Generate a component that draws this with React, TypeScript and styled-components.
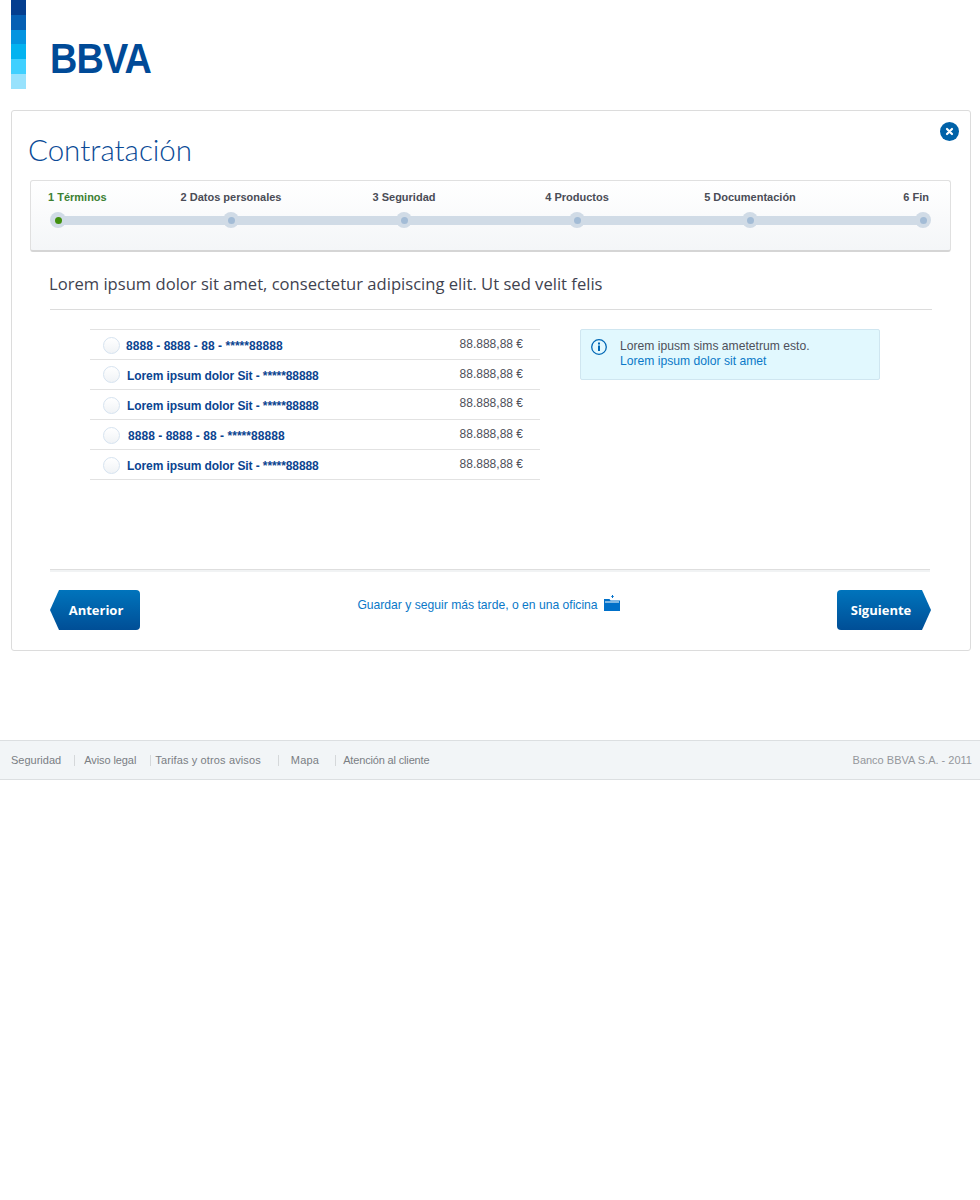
import React from "react";
import styled, { createGlobalStyle } from "styled-components";

const GlobalStyle = createGlobalStyle`
  html, body {
    margin: 0;
    padding: 0;
    background: #fff;
    font-family: "Liberation Sans", Arial, sans-serif;
  }
`;

const Page = styled.div`
  width: 980px;
  height: 1200px;
  overflow: hidden;
`;

const Header = styled.header`
  height: 110px;
  padding-left: 11px;
  display: flex;
  gap: 24px;
`;

const Stripes = styled.div`
  width: 15px;
  height: 89px;
  display: flex;
  flex-direction: column;
`;

const Stripe = styled.div<{ $color: string }>`
  flex: 1;
  background: ${({ $color }) => $color};
`;

const Logo = styled.div`
  margin-top: 35px;
  height: 46px;
  width: 100px;
  font-family: "Liberation Sans", Arial, sans-serif;
  font-size: 43px;
  line-height: 46px;
  font-weight: 700;
  color: #004a97;
  transform: scaleX(0.88);
  transform-origin: left center;
  letter-spacing: -1px;
  white-space: nowrap;
`;

const Card = styled.main`
  position: relative;
  box-sizing: border-box;
  width: 960px;
  height: 541px;
  margin-left: 11px;
  border: 1px solid #dcdcdc;
  border-radius: 3px;
  padding: 0 19px 0 18px;
`;

const CloseButton = styled.button`
  position: absolute;
  top: 11px;
  right: 11px;
  width: 19px;
  height: 19px;
  padding: 0;
  border: none;
  background: none;
  display: block;
`;

const Title = styled.h1`
  margin: 19px 0 0 -2px;
  height: 50px;
  font-family: Lato, sans-serif;
  font-size: 29.5px;
  line-height: 40px;
  font-weight: 300;
  color: #0a4a96;
`;

const Stepper = styled.section`
  box-sizing: border-box;
  width: 921px;
  height: 72px;
  border: 1px solid #e0e0e0;
  border-bottom: 2px solid #d5d5d5;
  border-radius: 3px;
  background: linear-gradient(#fff, #f4f6f8);
  padding: 9px 21px 0 17px;
`;

const StepLabels = styled.div`
  display: grid;
  grid-template-columns: 96.5px repeat(4, 173px) 1fr;
  height: 15px;
`;

const StepLabel = styled.span<{ $active?: boolean; $align: string }>`
  font-size: 11px;
  line-height: 15px;
  font-weight: 700;
  text-align: ${({ $align }) => $align};
  white-space: nowrap;
  color: ${({ $active }) => ($active ? "#3c8032" : "#4a4c56")};
`;

const StepTrack = styled.div`
  position: relative;
  margin: 7px -13px 0 2px;
  display: flex;
  justify-content: space-between;
  width: 881px;
`;

const TrackBar = styled.div`
  position: absolute;
  left: 8px;
  right: 8px;
  top: 4px;
  height: 9px;
  background: #d0dbe6;
`;

const Knob = styled.div`
  position: relative;
  width: 16px;
  height: 16px;
  border-radius: 50%;
  background: #d0dbe6;
  display: flex;
  align-items: center;
  justify-content: center;
`;

const KnobDot = styled.div<{ $active?: boolean }>`
  width: 7px;
  height: 7px;
  border-radius: 50%;
  background: ${({ $active }) => ($active ? "#41900f" : "#a3bcd6")};
`;

const Heading = styled.h2`
  margin: 20px 0 0 20px;
  height: 37px;
  width: 882px;
  border-bottom: 1px solid #dcdcdc;
  font-family: "Open Sans", sans-serif;
  font-size: 16.6px;
  line-height: 24px;
  font-weight: 400;
  text-indent: -1px;
  white-space: nowrap;
  color: #3f4350;
  box-sizing: content-box;
`;

const Columns = styled.div`
  display: flex;
  margin: 19px 0 0 60px;
  gap: 40px;
  height: 240px;
`;

const AccountList = styled.ul`
  list-style: none;
  margin: 0;
  padding: 0;
  width: 450px;
  height: 151px;
  border-top: 1px solid #e2e2e2;
`;

const AccountRow = styled.li`
  box-sizing: border-box;
  height: 30px;
  border-bottom: 1px solid #e2e2e2;
  display: flex;
  align-items: center;
  padding: 0 17px 0 13px;
`;

const Radio = styled.span<{ $shift: number }>`
  box-sizing: border-box;
  flex: none;
  width: 17px;
  height: 17px;
  border: 1.5px solid #d6e3f0;
  border-radius: 50%;
  background: linear-gradient(#fff, #f0f3f6);
  margin-top: ${({ $shift }) => $shift}px;
`;

const AccountName = styled.span<{ $indent: number; $spacing: number }>`
  margin: 2px auto 0 ${({ $indent }) => $indent}px;
  font-size: 12px;
  font-weight: 700;
  letter-spacing: ${({ $spacing }) => $spacing}px;
  color: #0b4490;
  white-space: nowrap;
`;

const Amount = styled.span<{ $shift: number }>`
  margin-top: ${({ $shift }) => $shift}px;
  font-size: 12px;
  color: #4e505a;
  white-space: nowrap;
`;

const InfoBox = styled.aside`
  box-sizing: border-box;
  width: 300px;
  height: 51px;
  background: #e1f8fe;
  border: 1px solid #cfe6f0;
  border-radius: 2px;
  display: flex;
  padding: 9px 0 0 10px;
  gap: 13px;
  font-size: 12.15px;
  line-height: 15px;
  color: #4e505a;
`;

const InfoLink = styled.a`
  display: block;
  color: #0a78c8;
`;

const Actions = styled.div`
  margin-left: 20px;
  width: 880px;
  border-top: 1px solid #dedede;
  box-shadow: inset 0 2px 0 #f1f3f4;
  height: 60px;
  padding-top: 20px;
  display: flex;
  align-items: flex-start;
  justify-content: space-between;
  box-sizing: content-box;
`;

const NavButton = styled.button<{ $dir: "prev" | "next" }>`
  height: 40px;
  width: ${({ $dir }) => ($dir === "prev" ? 90 : 94)}px;
  border: none;
  padding: ${({ $dir }) => ($dir === "prev" ? "0 0 0 2px" : "0 6px 0 0")};
  margin-right: ${({ $dir }) => ($dir === "next" ? -1 : 0)}px;
  border-radius: 4px;
  background: linear-gradient(#0074bc, #004e96);
  color: #fff;
  font-family: "Open Sans", sans-serif;
  font-size: 13px;
  line-height: 40px;
  font-weight: 700;
  clip-path: ${({ $dir }) =>
    $dir === "prev"
      ? "polygon(9px 0, 100% 0, 100% 100%, 9px 100%, 0 50%)"
      : "polygon(0 0, 85px 0, 100% 50%, 85px 100%, 0 100%)"};
`;

const SaveLater = styled.a`
  margin-top: 5px;
  display: flex;
  align-items: flex-start;
  gap: 6px;
  font-size: 12.15px;
  line-height: 20px;
  color: #0a78c8;
  white-space: nowrap;
`;

const Footer = styled.footer`
  box-sizing: border-box;
  margin-top: 89px;
  height: 40px;
  background: #f2f5f7;
  border-top: 1px solid #dcdfe1;
  border-bottom: 1px solid #dcdfe1;
  display: flex;
  align-items: center;
  padding: 0 8px 0 11px;
  font-size: 11px;
  color: #7a7e84;
`;

const FooterLink = styled.a<{ $gap: number; $pad: number; $spacing: number; $first?: boolean }>`
  margin-left: ${({ $gap }) => $gap}px;
  padding-left: ${({ $pad }) => $pad}px;
  letter-spacing: ${({ $spacing }) => $spacing}px;
  border-left: ${({ $first }) => ($first ? "none" : "1px solid #d5d8da")};
  line-height: 11px;
  white-space: nowrap;
`;

const Copyright = styled.span`
  margin-left: auto;
  color: #94979c;
`;

const stripes = ["#043e8f", "#0560b4", "#0494e0", "#03b3f0", "#40d0ff", "#98e2fd"];

const steps = [
  "1 Términos",
  "2 Datos personales",
  "3 Seguridad",
  "4 Productos",
  "5 Documentación",
  "6 Fin",
];

const accounts = [
  { name: "8888 - 8888 - 88 - *****88888", indent: 6, radio: 1, amount: -1, spacing: 0.04 },
  { name: "Lorem ipsum dolor Sit - *****88888", indent: 7, radio: -1, amount: -1, spacing: -0.09 },
  { name: "Lorem ipsum dolor Sit - *****88888", indent: 7, radio: 1, amount: -3, spacing: -0.09 },
  { name: "8888 - 8888 - 88 - *****88888", indent: 8, radio: 1, amount: -1, spacing: 0.04 },
  { name: "Lorem ipsum dolor Sit - *****88888", indent: 7, radio: 1, amount: -1, spacing: -0.09 },
];

const footerLinks = [
  { label: "Seguridad", gap: 0, pad: 0, spacing: 0 },
  { label: "Aviso legal", gap: 13, pad: 9, spacing: -0.08 },
  { label: "Tarifas y otros avisos", gap: 14, pad: 4, spacing: 0.13 },
  { label: "Mapa", gap: 17, pad: 12, spacing: 0.2 },
  { label: "Atención al cliente", gap: 16, pad: 7, spacing: -0.16 },
];

function App() {
  return (
    <Page>
      <GlobalStyle />
      <Header>
        <Stripes>
          {stripes.map((color) => (
            <Stripe key={color} $color={color} />
          ))}
        </Stripes>
        <Logo>BBVA</Logo>
      </Header>

      <Card>
        <CloseButton aria-label="Cerrar">
          <svg width="19" height="19" viewBox="0 0 19 19">
            <circle cx="9.5" cy="9.5" r="9.5" fill="#0062a8" />
            <path d="M7 7l5 5M12 7l-5 5" stroke="#fff" strokeWidth="2.2" strokeLinecap="round" />
          </svg>
        </CloseButton>
        <Title>Contratación</Title>

        <Stepper>
          <StepLabels>
            {steps.map((step, i) => (
              <StepLabel
                key={step}
                $active={i === 0}
                $align={i === 0 ? "left" : i === 5 ? "right" : "center"}
              >
                {step}
              </StepLabel>
            ))}
          </StepLabels>
          <StepTrack>
            <TrackBar />
            {steps.map((step, i) => (
              <Knob key={step}>
                <KnobDot $active={i === 0} />
              </Knob>
            ))}
          </StepTrack>
        </Stepper>

        <Heading>Lorem ipsum dolor sit amet, consectetur adipiscing elit. Ut sed velit felis</Heading>

        <Columns>
          <AccountList>
            {accounts.map((account, i) => (
              <AccountRow key={i}>
                <Radio $shift={account.radio} />
                <AccountName $indent={account.indent} $spacing={account.spacing}>
                  {account.name}
                </AccountName>
                <Amount $shift={account.amount}>88.888,88 €</Amount>
              </AccountRow>
            ))}
          </AccountList>
          <InfoBox>
            <svg width="16" height="16" viewBox="0 0 16 16" style={{ flex: "none" }}>
              <circle cx="8" cy="8" r="7.3" fill="none" stroke="#0067b5" strokeWidth="1.3" />
              <rect x="7" y="6.5" width="2" height="5.5" fill="#0067b5" />
              <rect x="7" y="3.5" width="2" height="2" fill="#0067b5" />
            </svg>
            <div>
              Lorem ipusm sims ametetrum esto.
              <InfoLink>Lorem ipsum dolor sit amet</InfoLink>
            </div>
          </InfoBox>
        </Columns>

        <Actions>
          <NavButton $dir="prev">Anterior</NavButton>
          <SaveLater>
            Guardar y seguir más tarde, o en una oficina
            <svg width="16" height="16" viewBox="0 0 16 16" style={{ flex: "none" }}>
              <path d="M0 4h5.5l1 1.5H16V16H0z" fill="#0070c9" />
              <path d="M1 7h14" stroke="#fff" strokeWidth="1" />
              <path d="M8.5 0v3M7.3 1.5h2.4" stroke="#0070c9" strokeWidth="1" />
            </svg>
          </SaveLater>
          <NavButton $dir="next">Siguiente</NavButton>
        </Actions>
      </Card>

      <Footer>
        {footerLinks.map((link, i) => (
          <FooterLink
            key={link.label}
            $gap={link.gap}
            $pad={link.pad}
            $spacing={link.spacing}
            $first={i === 0}
          >
            {link.label}
          </FooterLink>
        ))}
        <Copyright>Banco BBVA S.A. - 2011</Copyright>
      </Footer>
    </Page>
  );
}

export default App;
